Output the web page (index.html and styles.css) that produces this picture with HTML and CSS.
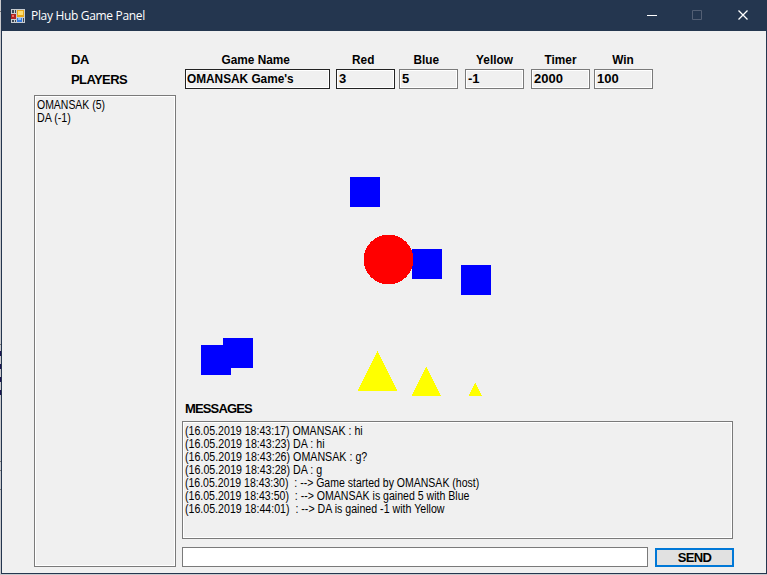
FILE: index.html
```html
<!DOCTYPE html>
<html lang="en">
<head>
<meta charset="utf-8">
<title>Play Hub Game Panel</title>
<link rel="stylesheet" href="styles.css">
</head>
<body>
<div class="window">
  <header class="titlebar">
    <svg class="app-icon" width="14" height="14" viewBox="0 0 14 14" shape-rendering="crispEdges">
      <rect width="14" height="14" fill="#c8ccd0"/>
      <rect x="1" y="1" width="2" height="3" fill="#3b4654"/><rect x="4" y="1" width="1" height="3" fill="#3b4654"/>
      <rect x="0" y="5" width="5" height="5" fill="#b32222"/><rect x="1" y="6" width="2" height="2" fill="#ef7060"/>
      <rect x="6" y="1" width="7" height="7" fill="#e8a817"/><rect x="7" y="2" width="5" height="4" fill="#ffdf72"/>
      <rect x="1" y="11" width="2" height="2" fill="#3b4654"/><rect x="4" y="11" width="1" height="2" fill="#3b4654"/>
      <rect x="6" y="9" width="5" height="4" fill="#3478dc"/><rect x="7" y="9" width="3" height="2" fill="#8dbdf8"/>
      <rect x="12" y="9" width="1" height="4" fill="#3b4654"/>
    </svg>
    <h1 class="title">Play Hub Game Panel</h1>
    <svg class="controls" width="110" height="31" viewBox="0 0 110 31" fill="none">
      <path d="M7 15.500h10" stroke="#fff"/>
      <path d="M52.500 10.500h9v9h-9z" stroke="#535f74"/>
      <path d="M98.500 10.500l9 9m0-9l-9 9" stroke="#fff" stroke-width="1.300"/>
    </svg>
  </header>
  <main class="panel">
    <aside class="sidebar">
      <div class="names bold"><span class="w-da">DA</span><span class="w-players">PLAYERS</span></div>
      <div class="box players"><div class="p1">OMANSAK (5)</div><div class="p2">DA (-1)</div></div>
    </aside>
    <section class="game">
      <div class="settings bold">
        <label class="setting name focus"><span>Game Name</span><b class="box"><i>OMANSAK Game's</i></b></label>
        <label class="setting focus red"><span>Red</span><b class="box">3</b></label>
        <label class="setting blue"><span>Blue</span><b class="box">5</b></label>
        <label class="setting yellow"><span>Yellow</span><b class="box">-1</b></label>
        <label class="setting timer"><span>Timer</span><b class="box">2000</b></label>
        <label class="setting win"><span>Win</span><b class="box">100</b></label>
      </div>
      <svg class="board" width="552" height="313" viewBox="182 89 552 313" shape-rendering="crispEdges">
        <g fill="#00f">
          <rect x="350" y="177" width="30" height="30"/>
          <rect x="412" y="249" width="30" height="30"/>
          <rect x="461" y="265" width="30" height="30"/>
          <rect x="201" y="345" width="30" height="30"/>
          <rect x="223" y="338" width="30" height="30"/>
        </g>
        <circle cx="388.500" cy="259.500" r="24.900" fill="#f00"/>
        <g fill="#ff0">
          <path d="M377.400 351l20 40h-40z"/>
          <path d="M426.300 366.500l14.900 29.500h-29.800z"/>
          <path d="M475.300 382.500l6.800 13.500h-13.600z"/>
        </g>
      </svg>
      <h2 class="messages-title bold"><span>MESSAGES</span></h2>
      <div class="box messages">
        <div class="m1">(16.05.2019 18:43:17) OMANSAK : hi</div>
        <div class="m2">(16.05.2019 18:43:23) DA : hi</div>
        <div class="m3">(16.05.2019 18:43:26) OMANSAK : g?</div>
        <div class="m4">(16.05.2019 18:43:28) DA : g</div>
        <div class="m5">(16.05.2019 18:43:30)&nbsp; : --&gt; Game started by OMANSAK (host)</div>
        <div class="m6">(16.05.2019 18:43:50)&nbsp; : --&gt; OMANSAK is gained 5 with Blue</div>
        <div class="m7">(16.05.2019 18:44:01)&nbsp; : --&gt; DA is gained -1 with Yellow</div>
      </div>
      <div class="composer">
        <input class="entry" type="text" aria-label="Message">
        <button class="send bold">SEND</button>
      </div>
    </section>
  </main>
</div>
</body>
</html>
```
FILE: styles.css
```css
* { box-sizing: border-box; }
body {
  margin: 0; width: 767px; height: 575px; overflow: hidden; padding-left: 1px; color: #000;
  font: 12px/13px "Liberation Sans", Arial, sans-serif;
  background: linear-gradient(#777, #777) 0 11px / 1px 1px no-repeat,
    linear-gradient(#777, #777) 0 344px / 1px 1px no-repeat,
    repeating-linear-gradient(#1b1350 0 5px, #c9c9cc 5px 13px) 0 351px / 1px 45px no-repeat,
    linear-gradient(#777, #777) 0 461px / 1px 1px no-repeat,
    linear-gradient(#777, #777) 0 470px / 1px 1px no-repeat,
    linear-gradient(#777, #777) 0 489px / 1px 1px no-repeat,
    #c9c9cc;
}
.window { height: 574px; border: 1px solid #24364f; border-top: 0; background: #f0f0f0; }
.titlebar { height: 31px; display: flex; align-items: center; background: #24364f; color: #fff; padding-left: 9px; }
.title { margin: 0 auto 0 6px; font: 12px/16px "Open Sans", sans-serif; letter-spacing: -0.320px; }
.controls { margin-right: 16px; }
.panel { display: flex; padding-left: 32px; height: 542px; }
.bold { font-weight: bold; font-size: 13px; line-height: 20px; }
.box { display: block; border: 1px solid #7a7a7a; box-shadow: inset 0 0 0 1px #fff; }
.sidebar { width: 142px; margin-right: 6px; }
.names { height: 64px; padding: 19px 0 0 37px; display: flex; flex-direction: column; align-items: flex-start; }
.w-da { letter-spacing: -0.500px; }
.w-players { letter-spacing: -0.600px; }
.players { height: 472px; padding: 3px 2px; }
.players div, .messages div { width: max-content; white-space: pre; transform-origin: 0 0; transform: scaleX(0.89); }
.players .p1 { transform: scaleX(0.872); }
.messages .m1 { transform: scaleX(0.885); }
.messages .m5 { transform: scaleX(0.876); }
.messages .m6 { transform: scaleX(0.880); }
.messages .m7 { transform: scaleX(0.885); }
.game { width: 552px; }
.settings { height: 58px; padding: 19px 0 0 3px; display: flex; }
.setting { width: 59px; display: flex; flex-direction: column; text-align: center; line-height: 19px; }
.setting.name { width: 145px; }
.setting .box { height: 20px; text-align: left; line-height: 18px; padding-left: 2px; }
.setting i { display: inline-block; margin-left: -1px; font-style: normal; transform-origin: 0 0; transform: scaleX(0.91); }
.focus .box { border-color: #222; }
.red { margin-left: 6px; }
.blue { margin-left: 4px; }
.yellow, .timer { margin-left: 7px; }
.win { margin-left: 4px; }
.setting > span { padding-right: 5px; transform: scaleX(0.91); }
.setting.name > span { padding-right: 4px; }
.setting.yellow > span, .setting.timer > span { padding-right: 0; }
.setting.win > span { padding-right: 1px; }
.board { display: block; height: 313px; }
.messages-title { margin: 0; padding: 0 3px; height: 19px; line-height: 14px; letter-spacing: -0.850px; }
.messages { width: 551px; height: 118px; padding: 3px 2px; }
.composer { margin-top: 8px; display: flex; }
.entry { width: 466px; height: 20px; border: 1px solid #7a7a7a; background: #fff; padding: 0 3px; margin: 0; }
.send { width: 79px; height: 19px; margin: 1px 0 0 7px; padding: 0; border: 2px solid #0078d7; background: #e1e1e1; color: #000; font-family: inherit; line-height: 15px; letter-spacing: -0.600px; }
```
